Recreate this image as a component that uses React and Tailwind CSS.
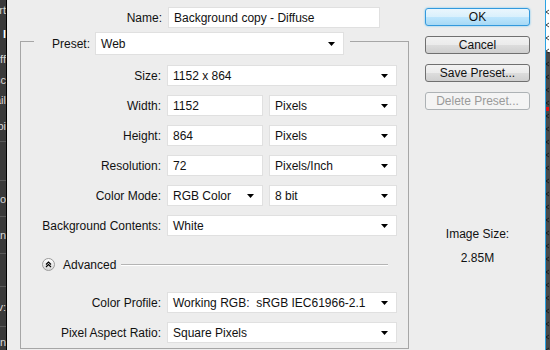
import React from "react";

const Arrow = () => (
  <svg width="7" height="4" viewBox="0 0 7 4" className="shrink-0">
    <path d="M0 0h7L3.5 4z" fill="#000" />
  </svg>
);

const Box = ({ className = "", children }) => (
  <div
    className={
      "h-[21px] bg-white border border-[#e0e0e0] flex items-center pl-[5px] pr-[8px] whitespace-pre " +
      className
    }
  >
    {children}
  </div>
);

const Select = ({ className = "", value }) => (
  <Box className={className}>
    <span className="flex-1">{value}</span>
    <Arrow />
  </Box>
);

const Label = ({ children }) => (
  <div className="w-[141px] text-right pr-[1px] shrink-0 whitespace-nowrap">{children}</div>
);

const Row = ({ label, children, className = "" }) => (
  <div className={"flex items-center gap-[5px] " + className}>
    <Label>{label}</Label>
    {children}
  </div>
);

const btnBase =
  "w-[105px] h-[18px] rounded-[3px] border flex items-center justify-center leading-none";

const leftCells = [
  { h: 20, t: "Art" },
  { h: 28, t: "l", cls: "text-white font-bold" },
  { h: 22, t: "Diff" },
  { h: 20, t: "Desc" },
  { h: 20, t: "Detail" },
  { h: 32, t: "Combi", sep: true },
  { h: 39, t: "", sep: true },
  { h: 36, t: "Mo", sep: true },
  { h: 37, t: "Scan", sep: true },
  { h: 33, t: "", sep: true },
  { h: 40, t: "Env:", sep: true },
  { h: 30, t: "Comn" },
];

const marks = Array.from({ length: 27 }, (_, i) => 12 + i * 13);

export default function App() {
  return (
    <div className="w-[550px] h-[350px] flex overflow-hidden bg-[#ededed] text-[12px] leading-[14px] text-[#111] font-['Liberation_Sans',Arial,sans-serif]">
      {/* left dark strip */}
      <div className="w-[7px] h-full flex flex-col bg-[#3a3a3a] border-r border-black shrink-0 text-[#d8d8d8] text-[11px]">
        {leftCells.map((c, i) => (
          <div
            key={i}
            style={{ height: c.h }}
            className={
              "flex justify-end items-center overflow-hidden whitespace-nowrap shrink-0 " +
              (c.sep ? "border-b border-[#5a5a5a] " : "") +
              (c.cls || "")
            }
          >
            <span className="shrink-0">{c.t}</span>
          </div>
        ))}
      </div>

      {/* left column */}
      <div className="w-[403px] shrink-0 pt-[7px]">
        <div className="flex items-center">
          <div className="w-[155px] text-right">Name:</div>
          <Box className="ml-[6px] w-[212px] h-[20px]">Background copy - Diffuse</Box>
        </div>

        <fieldset className="ml-[13px] mt-[4px] w-[389px] h-[317px] border border-[#a6a6a6] p-0 m-0">
          <legend className="ml-[13px] pl-[18px] pr-[6px] h-[19px] p-0">
            <div className="flex items-center gap-[5px] h-[23px]">
              <span>Preset:</span>
              <Select className="w-[249px] h-[23px]" value="Web" />
            </div>
          </legend>

          <div className="flex flex-col gap-[9px] pt-[14px]">
            <Row label="Size:">
              <Select className="w-[230px]" value="1152 x 864" />
            </Row>
            <Row label="Width:">
              <Box className="w-[96px]">1152</Box>
              <Select className="w-[128px] ml-[1px]" value="Pixels" />
            </Row>
            <Row label="Height:">
              <Box className="w-[96px]">864</Box>
              <Select className="w-[128px] ml-[1px]" value="Pixels" />
            </Row>
            <Row label="Resolution:">
              <Box className="w-[96px]">72</Box>
              <Select className="w-[128px] ml-[1px]" value="Pixels/Inch" />
            </Row>
            <Row label="Color Mode:">
              <Select className="w-[96px]" value="RGB Color" />
              <Select className="w-[128px] ml-[1px]" value="8 bit" />
            </Row>
            <Row label="Background Contents:">
              <Select className="w-[230px]" value="White" />
            </Row>
          </div>

          <div className="flex items-center h-[15px] mt-[21px] pl-[21px] pr-[20px]">
            <div className="w-[13px] h-[13px] rounded-full border border-[#9a9a9a] bg-[linear-gradient(to_bottom,#ffffff,#d6d6d6)] flex items-center justify-center shrink-0">
              <svg width="7" height="7" viewBox="0 0 7 7">
                <path d="M1 3.5L3.5 1L6 3.5M1 6L3.5 3.5L6 6" fill="none" stroke="#000" strokeWidth="1.1" />
              </svg>
            </div>
            <span className="ml-[8px]">Advanced</span>
            <div className="flex-1 ml-[5px] h-[2px] border-t border-[#b4b4b4] border-b border-b-white" />
          </div>

          <div className="flex flex-col gap-[9px] mt-[20px]">
            <Row label="Color Profile:">
              <Select className="w-[230px]" value="Working RGB:  sRGB IEC61966-2.1" />
            </Row>
            <Row label="Pixel Aspect Ratio:">
              <Select className="w-[230px]" value="Square Pixels" />
            </Row>
          </div>
        </fieldset>
      </div>

      {/* right column */}
      <div className="w-[135px] shrink-0 pt-[8px] pl-[15px] flex flex-col">
        <div className="flex flex-col gap-[10px]">
          <button className={btnBase + " border-[#3399dd] bg-[linear-gradient(to_bottom,#eaf6fd_0%,#d9f0fc_50%,#bee6fd_50%,#a7d9f5_100%)] shadow-[0_0_2px_#5bc0f5]"}>
            OK
          </button>
          <button className={btnBase + " border-[#707070] bg-[linear-gradient(to_bottom,#f2f2f2_0%,#ebebeb_50%,#dddddd_50%,#cfcfcf_100%)]"}>
            Cancel
          </button>
          <button className={btnBase + " border-[#707070] bg-[linear-gradient(to_bottom,#f2f2f2_0%,#ebebeb_50%,#dddddd_50%,#cfcfcf_100%)]"}>
            Save Preset...
          </button>
          <button className={btnBase + " border-[#adb2b5] bg-[#f4f4f4] text-[#9a9a9a]"}>
            Delete Preset...
          </button>
        </div>
        <div className="w-[105px] mt-[117px] flex flex-col items-center gap-[10px]">
          <span>Image Size:</span>
          <span>2.85M</span>
        </div>
      </div>

      {/* right edge */}
      <div className="w-px h-full bg-[#2ba3e3] shrink-0" />
      <svg className="flex-1 h-full" viewBox="0 0 4 350" preserveAspectRatio="none">
        <rect x="0" y="0" width="4" height="52" fill="#ffffff" />
        <rect x="0" y="52" width="4" height="298" fill="#484848" />
        {marks.map((y) => (
          <path key={y} d={`M0 ${y} L3 ${y - 2} M0 ${y} L3 ${y + 2}`} stroke="#111" strokeWidth="0.8" fill="none" />
        ))}
        <rect x="0" y="107" width="3" height="4" fill="#e01010" />
      </svg>
    </div>
  );
}
